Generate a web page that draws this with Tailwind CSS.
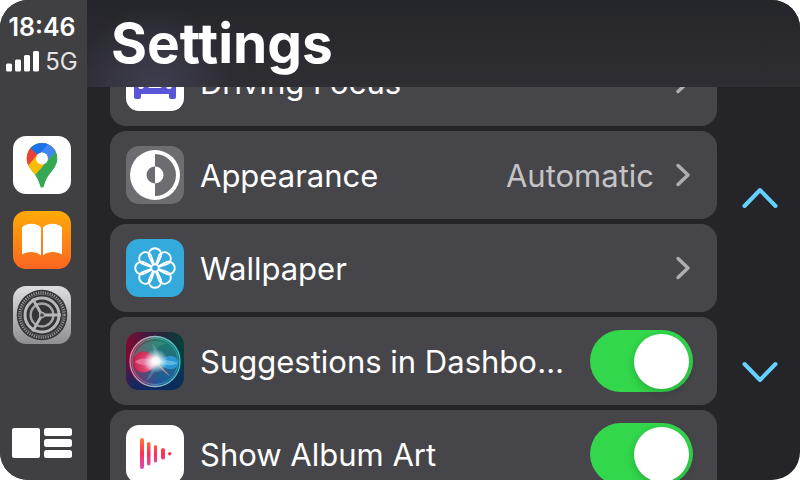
<!DOCTYPE html>
<html lang="en">
<head>
<meta charset="utf-8">
<meta name="viewport" content="width=device-width, initial-scale=1">
<title>Settings</title>
<script src="https://cdn.jsdelivr.net/npm/@tailwindcss/browser@4"></script>
</head>
<body class="bg-white font-['Inter','Liberation_Sans',sans-serif] text-white">
<div class="flex h-screen overflow-hidden rounded-[28px] bg-[#252429]">

  <nav aria-label="Apps" class="flex w-[87px] shrink-0 flex-col items-center bg-[#404042] pt-3 pr-[3px] pb-[21px]">
    <time class="text-[25px] leading-[30px] font-semibold">18:46</time>
    <div class="mt-1 flex items-center gap-[5px] text-[24px] leading-[32px] text-[#e4e4e5]">
      <svg class="h-[22px] w-[34px]" viewBox="0 0 34 22" fill="#fff" role="img" aria-label="Signal strength">
        <rect x="0" y="12.500" width="6" height="8" rx="1.500"/><rect x="9" y="8.500" width="6" height="12" rx="1.500"/><rect x="18" y="4" width="6" height="16.500" rx="1.500"/><rect x="27" y="0" width="6" height="20.500" rx="1.500"/>
      </svg>
      <span>5G</span>
    </div>

    <div class="mt-[58px] flex flex-col gap-[17px]">
      <button aria-label="Maps" class="size-[58px]">
        <svg class="size-full" viewBox="0 0 58 58">
          <defs><clipPath id="pin"><path d="M29 7C20 7 13.800 14 13.800 22.300c0 6 3 9.800 7 14.700 3.500 4.400 5 7.600 6.200 12.500 .8 3 3.200 3 4 0 1.200-4.900 2.700-8.100 6.200-12.500 4-4.900 7-8.700 7-14.700C44.200 14 38 7 29 7Z"/></clipPath></defs>
          <rect width="58" height="58" rx="13" fill="#fff"/>
          <g clip-path="url(#pin)">
            <rect width="58" height="58" fill="#34a853"/>
            <path d="M50 7.500 20 41.500 0 40V0h50Z" fill="#fbbc04"/>
            <path d="M50 7.500 29 31.300V22.500L24 18 34 6h16Z" fill="#4285f4"/>
            <path d="M11 34.500 29 13V22.500L31 30 20 41 11 40Z" fill="#fbbc04"/>
            <path d="M10 35.500 27.500 15 17 9 5 20Z" fill="#ea4335"/>
            <path d="M17 12 25.500 19.500 36.500 6H14Z" fill="#1a73e8"/>
            <path d="M29 31.300 45 13.200 50 30 30 50 20 41.500Z" fill="#34a853"/>
          </g>
          <circle cx="29" cy="22.500" r="6" fill="#fff"/>
        </svg>
      </button>
      <button aria-label="Books" class="size-[58px]">
        <svg class="size-full" viewBox="0 0 58 58">
          <defs><linearGradient id="books" x2="0" y2="1"><stop stop-color="#ffab08"/><stop offset="1" stop-color="#fa6521"/></linearGradient></defs>
          <rect width="58" height="58" rx="13" fill="url(#books)"/>
          <path d="M28 16.500c-4-5-15-5-19 0V43.500c4.500-3.300 14.500-3.500 19 1ZM30 16.500c4-5 15-5 19 0V43.500c-4.500-3.300-14.500-3.500-19 1Z" fill="#fff"/>
        </svg>
      </button>
      <button aria-label="Settings" class="size-[58px]">
        <svg class="size-full" viewBox="0 0 58 58" fill="none">
          <defs><linearGradient id="gear" x2="0" y2="1"><stop stop-color="#dddde2"/><stop offset="1" stop-color="#8e8e93"/></linearGradient></defs>
          <rect width="58" height="58" rx="13" fill="url(#gear)"/>
          <circle cx="29" cy="29" r="25.300" fill="#343436"/>
          <circle cx="29" cy="29" r="22.500" stroke="#97979b" stroke-width="2.500" stroke-dasharray="1.200 1.156"/>
          <circle cx="29" cy="29" r="20.700" stroke="#707074" stroke-width=".8"/>
          <circle cx="29" cy="29" r="17" stroke="#b8b8bc" stroke-width="3"/>
          <circle cx="29" cy="29" r="11.500" stroke="#a4a4a8" stroke-width="2.500"/>
          <circle cx="29" cy="29" r="13.800" stroke="#343436" stroke-width="1.800"/>
          <path d="M31 29h17M28 27.300l-8.500-14.700M28 30.700l-8.500 14.700" stroke="#b8b8bc" stroke-width="2.800"/>
          <circle cx="29" cy="29" r="2.500" fill="#4a4a4c" stroke="#aaaaae" stroke-width="1.300"/>
        </svg>
      </button>
    </div>

    <button aria-label="Dashboard" class="mt-auto h-[31px] w-[60px]">
      <svg class="size-full" viewBox="0 0 60 31" fill="#fff">
        <rect x="0" y="0" width="28" height="30" rx="2"/><rect x="32" y="0" width="28" height="8" rx="2.500"/><rect x="32" y="11" width="28" height="8" rx="2.500"/><rect x="32" y="22" width="28" height="8" rx="2.500"/>
      </svg>
    </button>
  </nav>

  <main class="flex min-w-0 flex-1 flex-col">
    <header class="h-[87px] shrink-0 bg-[radial-gradient(circle_at_68px_87px,#3f3e50,transparent_80px),linear-gradient(#25262b,#2e2d33)] pl-6">
      <h1 class="text-[55px] leading-[87px] font-bold">Settings</h1>
    </header>

    <div class="flex min-h-0 flex-1">
      <div class="min-w-0 flex-1 overflow-hidden pl-[23px]">
        <ul class="-mt-[49px] flex flex-col gap-[5px] text-[31px] leading-[40px]">
          <li>
            <a href="#focus" class="flex h-[88px] items-center rounded-2xl bg-[#464549] px-4">
              <svg class="size-[58px] shrink-0" viewBox="0 0 58 58">
                <rect width="58" height="58" rx="13" fill="#fff"/>
                <path d="M14 18q1-5 6-5h18q5 0 6 5l3 9q3 2 3 6v11q0 2-2 2h-3q-2 0-2-2v-3H15v3q0 2-2 2h-3q-2 0-2-2V33q0-4 3-6Z" fill="#5856d6"/>
                <path d="M15 26l3-8q.500-1 2-1h18q1.500 0 2 1l3 8Z" fill="#fff"/>
                <circle cx="15" cy="33" r="3" fill="#fff"/><circle cx="43" cy="33" r="3" fill="#fff"/><rect x="22" y="31" width="14" height="4" rx="2" fill="#fff"/>
              </svg>
              <span class="ml-4 min-w-0 flex-1 truncate pt-0.5">Driving Focus</span>
              <svg class="mr-2.5 h-6 w-4 shrink-0" viewBox="0 0 16 24" fill="none" stroke="#aeaeb0" stroke-width="3.500" stroke-linecap="round" stroke-linejoin="round"><path d="m3 2.500 10 9.500L3 21.500"/></svg>
            </a>
          </li>
          <li>
            <a href="#appearance" class="flex h-[88px] items-center rounded-2xl bg-[#464549] px-4">
              <svg class="size-[58px] shrink-0" viewBox="0 0 58 58">
                <rect width="58" height="58" rx="13" fill="#6d6c70"/>
                <circle cx="29" cy="29" r="25" fill="#fff"/>
                <path d="M29 8a21 21 0 0 1 0 42Z" fill="#6d6c70"/>
                <path d="M29 20.500a8.500 8.500 0 0 0 0 17Z" fill="#6d6c70"/>
                <path d="M29 20.500a8.500 8.500 0 0 1 0 17Z" fill="#fff"/>
              </svg>
              <span class="ml-4 min-w-0 flex-1 truncate pt-0.5">Appearance</span>
              <span class="mr-[21px] pt-0.5 text-[#c4c4c6]">Automatic</span>
              <svg class="mr-2.5 h-6 w-4 shrink-0" viewBox="0 0 16 24" fill="none" stroke="#aeaeb0" stroke-width="3.500" stroke-linecap="round" stroke-linejoin="round"><path d="m3 2.500 10 9.500L3 21.500"/></svg>
            </a>
          </li>
          <li>
            <a href="#wallpaper" class="flex h-[88px] items-center rounded-2xl bg-[#464549] px-4">
              <svg class="size-[58px] shrink-0" viewBox="0 0 58 58">
                <defs><path id="petal" d="M27 25.500 23.600 18.500A6.200 6.200 0 1 1 34.400 18.500L31 25.500"/></defs>
                <rect width="58" height="58" rx="13" fill="#34aadc"/>
                <g fill="none" stroke="#fff" stroke-width="1.800">
                  <use href="#petal"/><use href="#petal" transform="rotate(45 29 29)"/><use href="#petal" transform="rotate(90 29 29)"/><use href="#petal" transform="rotate(135 29 29)"/><use href="#petal" transform="rotate(180 29 29)"/><use href="#petal" transform="rotate(225 29 29)"/><use href="#petal" transform="rotate(270 29 29)"/><use href="#petal" transform="rotate(315 29 29)"/>
                  <circle cx="29" cy="29" r="3.700"/>
                </g>
              </svg>
              <span class="ml-4 min-w-0 flex-1 truncate pt-0.5">Wallpaper</span>
              <svg class="mr-2.5 h-6 w-4 shrink-0" viewBox="0 0 16 24" fill="none" stroke="#aeaeb0" stroke-width="3.500" stroke-linecap="round" stroke-linejoin="round"><path d="m3 2.500 10 9.500L3 21.500"/></svg>
            </a>
          </li>
          <li class="flex h-[88px] items-center rounded-2xl bg-[#464549] pr-6 pl-4">
            <svg class="size-[58px] shrink-0" viewBox="0 0 58 58">
              <defs>
                <linearGradient id="siriBg"><stop stop-color="#7d0b34"/><stop offset=".45" stop-color="#351d40"/><stop offset="1" stop-color="#073f3b"/></linearGradient>
                <linearGradient id="siriLow" x2="0" y2="1"><stop offset=".45" stop-color="#0b2b63" stop-opacity="0"/><stop offset="1" stop-color="#0b2b63"/></linearGradient>
                <linearGradient id="siriOrb" x2="0" y2="1"><stop stop-color="#168066"/><stop offset=".5" stop-color="#286a83"/><stop offset="1" stop-color="#1757a0"/></linearGradient>
                <linearGradient id="siriRim"><stop stop-color="#f1809a"/><stop offset=".5" stop-color="#93bfc6"/><stop offset="1" stop-color="#31c3ca"/></linearGradient>
                <linearGradient id="siriSide"><stop stop-color="#a32550" stop-opacity=".8"/><stop offset=".6" stop-color="#a32550" stop-opacity="0"/></linearGradient>
                <radialGradient id="siriRed" cx=".75" cy=".6" r=".75"><stop stop-color="#f7adc4"/><stop offset=".5" stop-color="#df4473"/><stop offset="1" stop-color="#c72550"/></radialGradient>
                <radialGradient id="siriGlow"><stop stop-color="#fff"/><stop offset=".3" stop-color="#fff" stop-opacity=".9"/><stop offset="1" stop-color="#c5f4ff" stop-opacity="0"/></radialGradient>
              </defs>
              <rect width="58" height="58" rx="13" fill="url(#siriBg)"/><rect width="58" height="58" rx="13" fill="url(#siriLow)"/>
              <circle cx="29" cy="29.500" r="25" fill="url(#siriOrb)"/>
              <circle cx="29" cy="29.500" r="25" fill="url(#siriSide)" stroke="url(#siriRim)" stroke-width="1.300"/>
              <circle cx="29" cy="29.500" r="23" fill="none" stroke="url(#siriRim)" stroke-width=".8" opacity=".6"/>
              <path d="M8 24C14 9 29 6 42 12c-10 0-15 6-13 17Z" fill="#52a991" opacity=".35"/>
              <path d="M31 30C25 44 8 44 8 30c0-14 17-14 23 0Z" fill="url(#siriRed)"/>
              <path d="M9 30c6-5 14-4 22 0-7 4-16 4-22 0Z" fill="#f4a0bd" opacity=".55"/>
              <path d="M31 30c8-8 20-8 21 0 .500 9-12 10-21 0Z" fill="#2d9de0" opacity=".85"/>
              <path d="M31 30q10-4 21 1-10 5-21-1Z" fill="#8edff2" opacity=".5"/>
              <path d="m30 29 15 16q-11-7-15-16Z" fill="#d990b4" opacity=".8"/>
              <path d="M30 30 20 49q10-6 10-19ZM30 30 26 12q10 6 4 18Z" fill="#79c8d4" opacity=".3"/>
              <circle cx="30" cy="29" r="12" fill="url(#siriGlow)"/>
            </svg>
            <label for="suggestions" class="ml-4 min-w-0 flex-1 truncate pt-0.5">Suggestions in Dashboard</label>
            <input id="suggestions" type="checkbox" role="switch" checked class="ml-6 flex h-[62px] w-[103px] shrink-0 appearance-none items-center rounded-full bg-[#787880] p-1 before:block before:size-[55px] before:rounded-full before:bg-white before:shadow-[0_3px_8px_rgba(0,0,0,0.2)] checked:justify-end checked:bg-[#32d74b]">
          </li>
          <li class="flex h-[88px] items-center rounded-2xl bg-[#464549] pr-6 pl-4">
            <svg class="size-[58px] shrink-0" viewBox="0 0 58 58">
              <defs><linearGradient id="wave" gradientUnits="userSpaceOnUse" x1="0" y1="13" x2="0" y2="45"><stop stop-color="#ff7a35"/><stop offset=".5" stop-color="#ff2d55"/><stop offset="1" stop-color="#d84fc8"/></linearGradient></defs>
              <rect width="58" height="58" rx="13" fill="#fff"/>
              <g fill="url(#wave)"><rect x="14" y="13" width="4" height="31" rx="2"/><rect x="21" y="17" width="3.500" height="23.500" rx="1.700"/><rect x="28" y="20" width="3" height="17.500" rx="1.500"/><rect x="35" y="23" width="4" height="11.500" rx="2"/><circle cx="43.700" cy="28.700" r="1.700"/></g>
            </svg>
            <label for="album-art" class="ml-4 min-w-0 flex-1 truncate pt-0.5">Show Album Art</label>
            <input id="album-art" type="checkbox" role="switch" checked class="ml-6 flex h-[62px] w-[103px] shrink-0 appearance-none items-center rounded-full bg-[#787880] p-1 before:block before:size-[55px] before:rounded-full before:bg-white before:shadow-[0_3px_8px_rgba(0,0,0,0.2)] checked:justify-end checked:bg-[#32d74b]">
          </li>
        </ul>
      </div>

      <div class="flex w-[83px] shrink-0 flex-col items-center justify-center gap-[126px] pt-0.5 pr-px pl-1">
        <button aria-label="Scroll up" class="flex h-12 w-12 items-center justify-center">
          <svg class="h-[22px] w-9" viewBox="0 0 36 22" fill="none" stroke="#64d2ff" stroke-width="4" stroke-linecap="round" stroke-linejoin="round"><path d="M2.500 19 18 3l15.500 16"/></svg>
        </button>
        <button aria-label="Scroll down" class="flex h-12 w-12 items-center justify-center">
          <svg class="h-[22px] w-9" viewBox="0 0 36 22" fill="none" stroke="#64d2ff" stroke-width="4" stroke-linecap="round" stroke-linejoin="round"><path d="m2.500 3 15.500 16L33.500 3"/></svg>
        </button>
      </div>
    </div>
  </main>
</div>
</body>
</html>
